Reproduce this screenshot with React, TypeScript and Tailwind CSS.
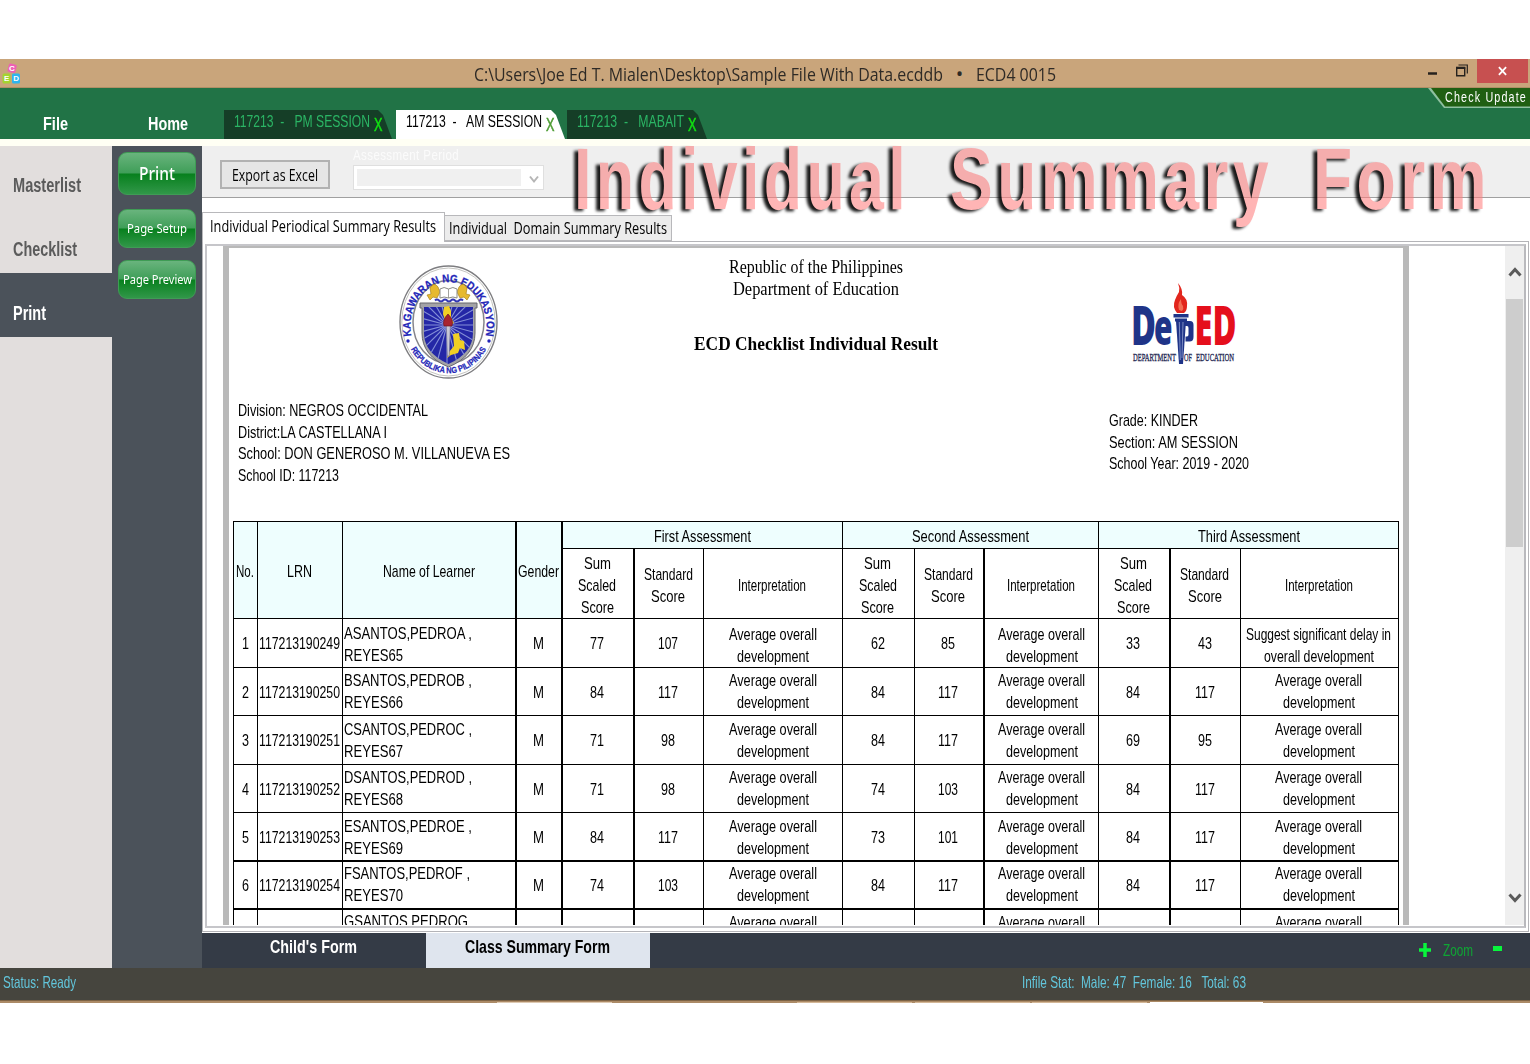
import { useLayoutEffect, useRef, useState } from "react";
import type { ReactNode } from "react";

/** One line of text, condensed or stretched horizontally to an exact width. */
function Fit({ w, className = "", children }: { w: number; className?: string; children: ReactNode }) {
  const ref = useRef<HTMLSpanElement>(null);
  const [scale, setScale] = useState(1);
  useLayoutEffect(() => {
    const el = ref.current;
    if (!el) return;
    const range = document.createRange();
    range.selectNodeContents(el);
    const natural = range.getBoundingClientRect().width;
    if (natural > 0) setScale(w / natural);
  }, []);
  return (
    <span className="block shrink-0" style={{ width: w }}>
      <span
        ref={ref}
        className={"block w-max origin-left whitespace-pre " + className}
        style={{ transform: `scaleX(${scale})` }}
      >
        {children}
      </span>
    </span>
  );
}

const ui = "font-['Open_Sans','Noto_Sans',sans-serif]";

function BlocksIcon() {
  return (
    <svg viewBox="0 0 20 22" className="mt-1 ml-0.5 h-[22px] w-5 shrink-0">
      <g transform="rotate(14 10 6)">
        <rect x="6" y="1" width="8" height="8.500" rx="1.5" fill="#ee5fb5" />
      </g>
      <rect x="0.500" y="10.500" width="8" height="10" rx="1.5" fill="#a4d430" />
      <rect x="10" y="10.500" width="8" height="10" rx="1.5" fill="#2db5ef" />
      <g fill="#fff" fontFamily="Liberation Sans, sans-serif" fontWeight="bold" fontSize="8" textAnchor="middle">
        <text x="10" y="8">C</text>
        <text x="4.6" y="18.400">E</text>
        <text x="14.200" y="18.400">D</text>
      </g>
    </svg>
  );
}

function TitleBar() {
  return (
    <div className="flex h-[29px] border-b border-[#b08f66] bg-[#c9a57b]">
      <BlocksIcon />
      <div className={"ml-[452px] flex h-[30px] items-center text-[17.5px] leading-[30px] text-[#2e2a26] " + ui}>
        <Fit w={469}>C:\Users\Joe Ed T. Mialen\Desktop\Sample File With Data.ecddb</Fit>
        <span className="w-[33px] text-center text-[20px]">•</span>
        <Fit w={80}>ECD4 0015</Fit>
      </div>
      <div className="ml-auto flex h-6">
        <svg viewBox="0 0 50 24" className="h-6 w-[50px]" fill="none" stroke="#26221e">
          <path d="M1 14.5h9" strokeWidth="2.5" />
          <path d="M29.7 9.2h8v7.500h-8z" strokeWidth="1.4" />
          <path d="M29 8.7h9.400" strokeWidth="2" />
          <path d="M31.5 6h8.800v8.500" strokeWidth="1.200" />
        </svg>
        <div className="flex h-6 w-[51px] items-center justify-center bg-[#c75050]">
          <svg viewBox="0 0 10 10" className="h-[10px] w-[9px]" stroke="#fff" strokeWidth="2">
            <path d="M1 .7l8 8.600M9 .7l-8 8.600" />
          </svg>
        </div>
        <div className="w-0.5" />
      </div>
    </div>
  );
}

function SessionTab(props: {
  box: string;
  number: string;
  name: string;
  w: number;
  active?: boolean;
}) {
  const { box, number, name, w, active } = props;
  return (
    <div
      className={
        "flex h-[29px] pl-2.5 [clip-path:polygon(0_0,calc(100%-14px)_0,calc(100%-9px)_5px,100%_100%,0_100%)] " +
        box +
        (active ? " bg-white text-black" : " bg-[#153e27] text-[#2bb565]")
      }
    >
      <Fit w={w} className="text-[16.5px] leading-[23px]">{`${number}  -   ${name}`}</Fit>
      <span
        className={
          "mt-[3px] ml-1 [-webkit-text-stroke:0.500px_currentColor] " + (active ? "text-[#4d9c33]" : "text-[#12e012]")
        }
      >
        <Fit w={8.5} className="text-[19px] leading-[24px]">
          X
        </Fit>
      </span>
    </div>
  );
}

function Ribbon() {
  return (
    <div className="flex h-[51px] bg-[#217346]">
      <div className="mt-[22px] flex h-[29px] grow">
        <div className="mt-[3px] ml-[43px] text-[19px] leading-[22px] font-bold text-white">
          <Fit w={25}>File</Fit>
        </div>
        <div className="mt-[3px] ml-20 text-[19px] leading-[22px] font-bold text-white">
          <Fit w={40}>Home</Fit>
        </div>
        <SessionTab box="ml-9 w-[168px]" number="117213" name="PM SESSION" w={136} />
        <SessionTab box="ml-1 w-[169px]" number="117213" name="AM SESSION" w={136} active />
        <SessionTab box="ml-0.5 w-[140px]" number="117213" name="MABAIT" w={107} />
      </div>
      <div className="h-[20px] w-[102px] bg-[#8fc0a0] [clip-path:polygon(0_0,100%_0,100%_100%,16px_100%)]">
        <div className="flex h-[18.500px] justify-end bg-[#205f12] pr-[3px] [clip-path:polygon(3px_0,100%_0,100%_100%,17px_100%)]">
          <Fit w={82} className="text-[14px] leading-[19px] tracking-[1.500px] text-white">
            Check Update
          </Fit>
        </div>
      </div>
    </div>
  );
}

function SideNav() {
  return (
    <nav className="flex w-28 flex-col bg-[#e2dedd] text-[19.500px] font-bold text-[#5b5b5b]">
      <div className="flex h-16 items-center pt-4 pl-[13px]">
        <Fit w={68}>Masterlist</Fit>
      </div>
      <div className="flex h-[63px] items-center pt-4 pl-[13px]">
        <Fit w={64}>Checklist</Fit>
      </div>
      <div className="flex h-16 items-center bg-[#4b525a] pt-[18px] pl-[13px] text-white">
        <Fit w={33}>Print</Fit>
      </div>
    </nav>
  );
}

function GlossButton({ box, w, text, label }: { box: string; w: number; text: string; label: string }) {
  return (
    <button
      className={
        "flex w-[78px] items-center justify-center rounded-[9px] border border-[#3f9c55] bg-[linear-gradient(#69b47d,#3f9e58_49%,#07801d_51%,#319749)] text-white font-['Noto_Sans',sans-serif] " +
        box
      }
    >
      <Fit w={w} className={text}>
        {label}
      </Fit>
    </button>
  );
}

function ActionPanel() {
  return (
    <div className="flex w-[90px] flex-col items-center bg-[#4b525a] pt-1.5">
      <GlossButton box="h-[43px]" w={36} text="text-[17.500px] font-medium" label="Print" />
      <GlossButton box="mt-3.5 h-[39px] pt-0.5" w={60} text="text-[12.500px]" label="Page Setup" />
      <GlossButton box="mt-3 h-[39px] pt-0.5" w={69} text="text-[12.500px]" label="Page Preview" />
    </div>
  );
}

function Toolbar() {
  return (
    <div className="flex h-[52px] shrink-0 border-b border-[#a0a0a0] bg-[#efefef]">
      <button
        className={
          "mt-3.5 ml-[18px] flex h-[29px] w-[110px] items-center justify-center border-2 border-[#b2b2b2] bg-[#e6e6e6] text-[16px] text-black " +
          ui
        }
      >
        <Fit w={86}>Export as Excel</Fit>
      </button>
      <div className="ml-[23px] w-[191px]">
        <Fit w={106} className="text-[14px] leading-[19px] tracking-[0.5px] text-[#fbfbfb]">
          Assessment Period
        </Fit>
        <div className="flex h-[25px] border border-[#dfdfdf] bg-white p-[3px]">
          <div className="w-[164px] bg-[#f0f0f0]" />
          <svg viewBox="0 0 10 9" className="mt-1.5 ml-2 h-[9px] w-[10px]" fill="none" stroke="#b5b5b5" strokeWidth="2">
            <path d="M1 1.500l4 5 4-5" />
          </svg>
        </div>
      </div>
    </div>
  );
}

function BannerWord({ w, children }: { w: number; children: string }) {
  return (
    <Fit
      w={w}
      className="bg-[linear-gradient(#f5adad_68px,#d88c8c_68px,#d88c8c_69px,#ffb5b5_69px)] bg-clip-text text-[87px] leading-[100px] font-bold tracking-[6px] text-transparent"
    >
      {children}
    </Fit>
  );
}

function Banner() {
  return (
    <div className="pointer-events-none absolute top-[129px] left-[574px] z-20 flex [filter:drop-shadow(-4px_2px_1.5px_rgba(0,0,0,0.9))]">
      <BannerWord w={336}>Individual</BannerWord>
      <div className="w-[40px]" />
      <BannerWord w={323}>Summary</BannerWord>
      <div className="w-[40px]" />
      <BannerWord w={178}>Form</BannerWord>
    </div>
  );
}

const rays = Array.from({ length: 24 }, (_, i) => (i * Math.PI) / 12);

function Seal() {
  return (
    <svg viewBox="0 0 99 114" className="mt-[17px] ml-[170px] h-[114px] w-[99px]">
      <defs>
        <path id="sealTop" d="M13 74 A38 44.500 0 1 1 86 74" />
        <path id="sealBottom" d="M9 78 A44.500 51.500 0 0 0 90 78" />
        <clipPath id="shield">
          <path d="M25 42H74V68Q74 88 49.5 99Q25 88 25 68Z" />
        </clipPath>
      </defs>
      <ellipse cx="49.5" cy="57" rx="48.500" ry="56" fill="#fff" stroke="#7d7d80" strokeWidth="1.4" />
      <ellipse cx="49.5" cy="57" rx="46.700" ry="54" fill="none" stroke="#b4b4ae" strokeWidth="0.8" />
      <ellipse cx="49.5" cy="57" rx="35.500" ry="41.500" fill="#fdfdfb" stroke="#85858a" strokeWidth="1.5" />
      <g fill="#2326b8" stroke="#2326b8" strokeWidth="0.250" fontFamily="Liberation Sans, sans-serif" fontWeight="bold">
        <text fontSize="11">
          <textPath href="#sealTop" startOffset="50%" textAnchor="middle" textLength="148" lengthAdjust="spacingAndGlyphs">
            KAGAWARAN NG EDUKASYON
          </textPath>
        </text>
        <text fontSize="8.500">
          <textPath href="#sealBottom" startOffset="50%" textAnchor="middle" textLength="94" lengthAdjust="spacingAndGlyphs">
            REPUBLIKA NG PILIPINAS
          </textPath>
        </text>
      </g>
      <circle cx="9" cy="76" r="1.7" fill="#2326b8" />
      <circle cx="90" cy="76" r="1.7" fill="#2326b8" />
      <g fill="#e6b92f" stroke="#a98421" strokeWidth="0.7">
        <path d="M31 23q4-7 8-1l2 5-3 6-4-1-3 3-3-5 4-1z" />
        <path d="M68 23q-4-7-8-1l-2 5 3 6 4-1 3 3 3-5-4-1z" />
      </g>
      <path d="M41 24q4-3 8.500 0q4.500-3 8.500 0v9q-4-2-8.500 0q-4.500-2-8.500 0z" fill="#fff" stroke="#8b8b85" strokeWidth="1" />
      <path d="M49.500 24v9" stroke="#8b8b85" strokeWidth="0.8" />
      <path d="M36 35.500q2-2 4 0t4 0 4 0 4 0 4 0 4 0 4 0" fill="none" stroke="#3439b5" strokeWidth="2" />
      <path d="M21 38H78V43H76V68Q76 91 49.500 102Q23 91 23 68V43H21Z" fill="#a3a3a6" stroke="#66666d" strokeWidth="1" />
      <path d="M25 42H74V68Q74 88 49.500 99Q25 88 25 68Z" fill="#2427a6" />
      <g clipPath="url(#shield)" stroke="#8490d8" strokeWidth="1.100">
        {rays.map((a) => (
          <line key={a} x1="48" y1="60" x2={48 + 50 * Math.cos(a)} y2={60 + 50 * Math.sin(a)} />
        ))}
      </g>
      <path d="M45 42l5-1 2 5 0 7 3 5-4 2-5-5-2-6z" fill="#f1cf25" />
      <path d="M54 69l6-1 1 7 4 1 1 9-5-2-2 5-7 2-4 3 2-6 5-6z" fill="#f1cf25" />
      <path d="M47.300 60h4l-1 31h-2z" fill="#c9c9d6" stroke="#6d6d8e" strokeWidth="0.600" />
      <path d="M45 61q-2-6 4-12q6 6 4 12z" fill="#a8242f" stroke="#6e1420" strokeWidth="0.700" />
    </svg>
  );
}

function DepEdLogo() {
  return (
    <svg viewBox="0 0 104 83" className="mt-[33px] ml-[187px] h-[83px] w-[104px] shrink-0 overflow-visible">
      <g fontFamily="Open Sans, Noto Sans, sans-serif" fontWeight="800" fontSize="54">
        <text x="-2" y="63.500" fill="#1f3488" textLength="25" lengthAdjust="spacingAndGlyphs">
          D
        </text>
        <text x="21" y="63.500" fill="#1f3488" textLength="18.500" lengthAdjust="spacingAndGlyphs" fontSize="50">
          e
        </text>
        <text x="61.500" y="63.500" fill="#e50f1c" textLength="42" lengthAdjust="spacingAndGlyphs">
          ED
        </text>
      </g>
      <path d="M50 40h7q3.500 0 3.500 4v12q0 4.500-4 4.500h-4v-5h1.500q1.500 0 1.500-2v-6.500q0-2-1.500-2h-4z" fill="#1f3488" />
      <path d="M40.500 33h15v3.500h-15zM42 37.500h12v3h-12z" fill="#1f3488" />
      <path d="M43 40h10l-3 43h-4z" fill="#1f3488" />
      <path d="M46.300 41l1 38M50 41l-1 36" stroke="#b9c6ea" strokeWidth="0.600" />
      <path d="M44 32q-5-6-2-13q2-5 4-8q1-4-1-9q5 6 4 12q6 4 5 11q0 5-3 7z" fill="#e2261d" />
      <path d="M46 29q-2-6 2-11q0 5 2 7q1 3-1 5z" fill="#f36e54" />
      <g fontFamily="Liberation Serif, serif" fontSize="10.500" fill="#1d2550" stroke="#1d2550" strokeWidth="0.300">
        <text x="0" y="80" textLength="43" lengthAdjust="spacingAndGlyphs">DEPARTMENT</text>
        <text x="51" y="80" textLength="8" lengthAdjust="spacingAndGlyphs">OF</text>
        <text x="63" y="80" textLength="38" lengthAdjust="spacingAndGlyphs">EDUCATION</text>
      </g>
    </svg>
  );
}

type Result = { sum: string; std: string; text: [string, number][] };
type Row = { no: string; lrn: string; name: string; nameW: number; name2: string; results: Result[] };

const average = (w: number): [string, number][] => [
  ["Average overall", w],
  ["development", 72],
];

const row = (no: string, lrn: string, name: string, name2: string, s: string[], nameW = 128): Row => ({
  no,
  lrn,
  name,
  nameW,
  name2,
  results: [
    { sum: s[0], std: s[1], text: average(88) },
    { sum: s[2], std: s[3], text: average(87) },
    {
      sum: s[4],
      std: s[5],
      text:
        s[4] === "33"
          ? [
              ["Suggest significant delay in", 145],
              ["overall development", 110],
            ]
          : average(87),
    },
  ],
});

const rows: Row[] = [
  row("1", "117213190249", "ASANTOS,PEDROA ,", "REYES65", ["77", "107", "62", "85", "33", "43"]),
  row("2", "117213190250", "BSANTOS,PEDROB ,", "REYES66", ["84", "117", "84", "117", "84", "117"]),
  row("3", "117213190251", "CSANTOS,PEDROC ,", "REYES67", ["71", "98", "84", "117", "69", "95"]),
  row("4", "117213190252", "DSANTOS,PEDROD ,", "REYES68", ["71", "98", "74", "103", "84", "117"]),
  row("5", "117213190253", "ESANTOS,PEDROE ,", "REYES69", ["84", "117", "73", "101", "84", "117"]),
  row("6", "117213190254", "FSANTOS,PEDROF ,", "REYES70", ["74", "103", "84", "117", "84", "117"], 126),
  row("", "", "GSANTOS,PEDROG", "", ["", "", "", "", "", ""], 124),
];

const rowHeights = ["h-[49px]", "h-12", "h-[49px]", "h-12", "h-12", "h-[48px]", "h-[49px]"];
const namePads = ["pt-1", "pt-0.5", "pt-[3px]", "pt-0.5", "pt-[3px]", "pt-px", "pt-px"];
const textPads = ["pt-[5px]", "pt-px", "pt-0.5", "pt-px", "pt-0.5", "pt-0", "pt-0"];

const numW = (v: string) => (v.length === 3 ? 20 : v.length === 2 ? 14 : 7);

const cell = "flex flex-col items-center justify-center border-black";
const cols = [
  "border-l",
  "border-l",
  "border-l",
  "border-l-2",
  "border-l-2",
  "border-l-2",
  "border-l",
  "border-l",
  "border-l",
  "border-l-2",
  "border-l",
  "border-l-2",
  "border-l",
];
const grid = "grid grid-cols-[24px_85px_173px_46px_72px_70px_139px_72px_69px_115px_71px_71px_158px] w-[1165px]";

function Lines({ lines }: { lines: [string, number][] }) {
  return (
    <>
      {lines.map(([t, w]) => (
        <Fit key={t} w={w}>
          {t}
        </Fit>
      ))}
    </>
  );
}

function ResultTable() {
  const subHeads: [string, number][][] = [
    [["Sum", 27], ["Scaled", 38], ["Score", 33]],
    [["Standard", 49], ["Score", 34]],
    [["Interpretation", 68]],
  ];
  return (
    <div className="ml-1 w-[1166px] border-r border-black text-[17px] leading-[21.7px]">
      <div className={grid + " grid-rows-[27px_70px]"}>
        {([["No.", 18], ["LRN", 25], ["Name of Learner", 92], ["Gender", 41]] as [string, number][]).map(([t, w], i) => (
          <div key={t} className={`row-span-2 border-t bg-[#eefefe] pt-[3px] pr-px ${cell} ${cols[i]}`}>
            <Fit w={w}>{t}</Fit>
          </div>
        ))}
        {([["First Assessment", 97], ["Second Assessment", 117], ["Third Assessment", 102]] as [string, number][]).map(
          ([t, w], i) => (
            <div key={t} className={`col-span-3 border-t bg-[#eefefe] pt-1 ${cell} ${i === 0 ? "border-l-2" : "border-l"}`}>
              <Fit w={w}>{t}</Fit>
            </div>
          ),
        )}
        {[0, 1, 2].flatMap((g) =>
          subHeads.map((lines, i) => (
            <div key={g + "-" + i} className={`border-t pt-[5px] pr-0.5 ${cell} ${cols[4 + g * 3 + i]}`}>
              <Lines lines={lines} />
            </div>
          )),
        )}
      </div>
      {rows.map((r, n) => {
        const top = n >= 5 ? "border-t-2" : "border-t";
        return (
          <div key={r.name} className={`${grid} ${rowHeights[n]}`}>
            <div className={`pt-0.5 ${cell} border-l ${top}`}>{r.no && <Fit w={7}>{r.no}</Fit>}</div>
            <div className={`pt-0.5 pr-px ${cell} border-l ${top}`}>{r.lrn && <Fit w={81}>{r.lrn}</Fit>}</div>
            <div className={`border-l border-black pl-px ${namePads[n]} ${top}`}>
              <Fit w={r.nameW}>{r.name}</Fit>
              {r.name2 && <Fit w={59}>{r.name2}</Fit>}
            </div>
            <div className={`pt-0.5 pr-px ${cell} border-l-2 ${top}`}>{r.no && <Fit w={11}>M</Fit>}</div>
            {r.results.flatMap((res, g) => [
              <div key={g + "a"} className={`pt-0.5 pr-0.5 ${cell} ${cols[4 + g * 3]} ${top}`}>
                {res.sum && <Fit w={numW(res.sum)}>{res.sum}</Fit>}
              </div>,
              <div key={g + "b"} className={`pt-0.5 pr-0.5 ${cell} ${cols[5 + g * 3]} ${top}`}>
                {res.std && <Fit w={numW(res.std)}>{res.std}</Fit>}
              </div>,
              <div key={g + "c"} className={`${textPads[n]} ${g === 2 ? "pr-0.5" : ""} ${cell} ${cols[6 + g * 3]} ${top}`}>
                <Lines lines={res.text} />
              </div>,
            ])}
          </div>
        );
      })}
    </div>
  );
}

function ReportPage() {
  return (
    <div className="ml-4 h-[679px] w-[1186px] shrink-0 overflow-hidden border-x-[6px] border-t-2 border-[#b9b9b9] bg-white">
      <div className="flex h-[151px]">
        <Seal />
        <div className="ml-[188px] flex w-[260px] flex-col items-center pt-[9px] font-['Liberation_Serif',serif] text-[18px] leading-[21.7px]">
          <Fit w={174}>Republic of the Philippines</Fit>
          <Fit w={166}>Department of Education</Fit>
          <div className="h-[33px]" />
          <Fit w={244} className="text-[19px] font-bold">
            ECD Checklist Individual Result
          </Fit>
        </div>
        <DepEdLogo />
      </div>
      <div className="flex h-[122px] text-[17px] leading-[21.7px]">
        <div className="ml-[9px] w-[871px] pt-px">
          <Fit w={190}>Division: NEGROS OCCIDENTAL</Fit>
          <Fit w={149}>District:LA CASTELLANA I</Fit>
          <Fit w={272}>School: DON GENEROSO M. VILLANUEVA ES</Fit>
          <Fit w={101}>School ID: 117213</Fit>
        </div>
        <div className="pt-[11px]">
          <Fit w={89}>Grade: KINDER</Fit>
          <Fit w={129}>Section: AM SESSION</Fit>
          <Fit w={140}>School Year: 2019 - 2020</Fit>
        </div>
      </div>
      <ResultTable />
    </div>
  );
}

function ScrollBar() {
  return (
    <div className="ml-auto flex h-[679px] w-[19px] flex-col items-center bg-[#efefef]">
      <svg viewBox="0 0 14 10" className="mt-[21px] h-2.5 w-3.5 shrink-0" fill="none" stroke="#5a5a5a" strokeWidth="3">
        <path d="M1.500 8.500L7 2.500l5.500 6" />
      </svg>
      <div className="mt-[22px] h-[248px] w-[17px] bg-[#cdcdcd]" />
      <svg viewBox="0 0 14 10" className="mt-auto mb-[22px] h-2.5 w-3.5 shrink-0" fill="none" stroke="#5a5a5a" strokeWidth="3">
        <path d="M1.500 1.500L7 7.500l5.500-6" />
      </svg>
    </div>
  );
}

function Main() {
  return (
    <main className="flex grow flex-col bg-white">
      <Toolbar />
      <div className={"flex h-[43px] shrink-0 items-end text-[16px] leading-[24px] " + ui}>
        <div className="z-10 -mb-px h-[30px] w-[243px] border border-b-0 border-[#b8b8bb] bg-white pt-px pl-[7px]">
          <Fit w={226}>Individual Periodical Summary Results</Fit>
        </div>
        <div className="h-[26px] w-[227px] border border-l-0 border-[#b8b8bb] bg-[#ececec] pl-1">
          <Fit w={218}>Individual  Domain Summary Results</Fit>
        </div>
      </div>
      <div className="h-[691px] w-[1327px] shrink-0 border border-[#b4b4b8] bg-white p-0.5">
        <div className="flex h-[684px] border-2 border-[#c6c6ca] border-r-[#b9b9bd]">
          <ReportPage />
          <ScrollBar />
        </div>
      </div>
      <div className="mt-px flex h-[35px] bg-[#343b46] text-[19px] leading-[28px] font-bold">
        <div className="flex w-56 justify-center pr-px text-white">
          <Fit w={87}>Child's Form</Fit>
        </div>
        <div className="flex w-56 justify-center bg-[#dfe5ee] pr-px text-black">
          <Fit w={145}>Class Summary Form</Fit>
        </div>
        <div className="ml-auto flex pr-7 text-[17px] leading-[35px] font-normal text-[#0fa534]">
          <svg viewBox="0 0 12 14" className="mt-2.5 mr-3 h-3.5 w-3" stroke="#08f53c" strokeWidth="3.500">
            <path d="M6 0v14M0 7h12" />
          </svg>
          <Fit w={30}>Zoom</Fit>
          <div className="mt-[13px] ml-5 h-[5px] w-[9px] bg-[#08f53c]" />
        </div>
      </div>
    </main>
  );
}

export default function App() {
  return (
    <div className="relative h-[1064px] w-[1530px] overflow-hidden bg-white pt-[59px] font-['Liberation_Sans',Arial,sans-serif] text-black">
      <TitleBar />
      <Ribbon />
      <div className="h-[7px] bg-[#fffff4]" />
      <div className="flex h-[822px]">
        <SideNav />
        <ActionPanel />
        <Main />
      </div>
      <footer className="flex h-8 bg-[#46453e] text-[16.500px] leading-[29px] text-[#62c6dc]">
        <div className="ml-[3px] w-[1019px]">
          <Fit w={73}>Status: Ready</Fit>
        </div>
        <Fit w={224}>Infile Stat:  Male: 47  Female: 16   Total: 63</Fit>
      </footer>
      <div className="flex h-[3px] items-end border-t border-[#7d6345] bg-[#ab8a66]">
        <div className="ml-[497px] h-px w-[115px] bg-[#ddc9b2]" />
        <div className="ml-[185px] h-px w-[115px] bg-[#d3b797]" />
        <div className="ml-[3px] h-px w-[115px] bg-[#d3b797]" />
        <div className="ml-[2px] h-px w-[115px] bg-[#d3b797]" />
        <div className="ml-[3px] h-px w-[113px] bg-white" />
      </div>
      <Banner />
    </div>
  );
}
